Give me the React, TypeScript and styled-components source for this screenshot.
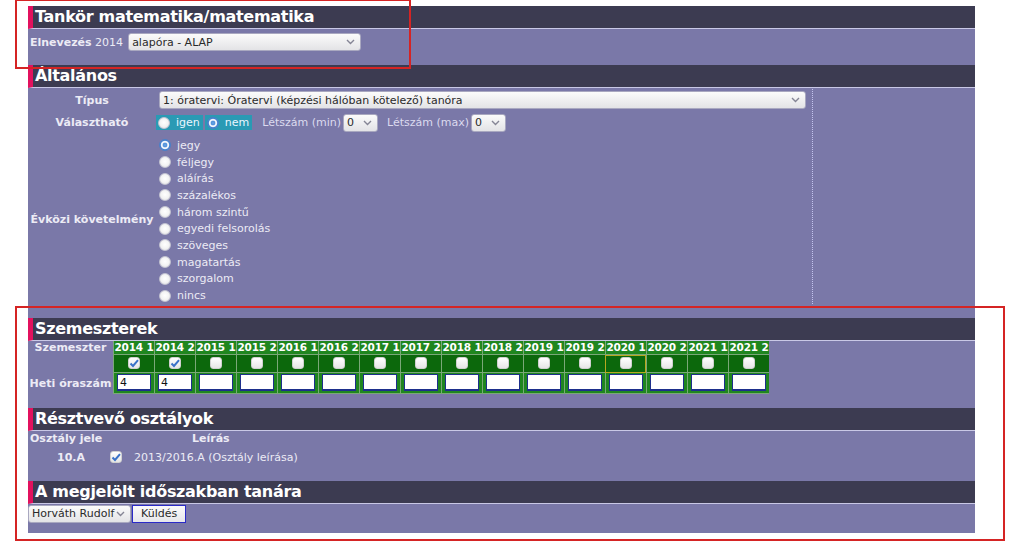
import React from "react";
import styled, { createGlobalStyle, css } from "styled-components";

const Global = createGlobalStyle`
  html, body { margin: 0; padding: 0; background: #fff; }
  body { font-family: "DejaVu Sans", "Noto Sans", sans-serif; font-size: 11px; color: #ecebf5; }
  * { box-sizing: border-box; }
`;

const Page = styled.div`
  position: relative;
  width: 1024px;
  height: 544px;
  padding: 6px 0 0 28px;
`;

const Column = styled.div`
  width: 947px;
  display: flex;
  flex-direction: column;
`;

const Header = styled.div`
  height: 23px;
  background: #3c3b51;
  border-left: 5px solid #e2115e;
  border-bottom: 1px solid #c9c8e6;
  color: #fff;
  font-weight: bold;
  font-size: 16px;
  letter-spacing: -0.3px;
  line-height: 22px;
  padding-left: 2px;
  white-space: nowrap;
`;

const Body = styled.div<{ $pt?: number; $pb?: number }>`
  background: #7a78a8;
  padding: ${(p) => p.$pt ?? 0}px 0 ${(p) => p.$pb ?? 14}px 0;
`;

const Row = styled.div<{ $gap?: number }>`
  display: flex;
  align-items: center;
  gap: ${(p) => p.$gap ?? 0}px;
`;

const Label = styled.span<{ $bold?: boolean }>`
  font-weight: ${(p) => (p.$bold ? "bold" : "normal")};
  color: #ecebf5;
  white-space: nowrap;
`;

const SelectBox = styled.div<{ $w: number; $h?: number }>`
  width: ${(p) => p.$w}px;
  height: ${(p) => p.$h ?? 18}px;
  background: linear-gradient(#fbfbfb, #e3e3e6);
  border: 1px solid #a9a8c0;
  border-radius: 3px;
  color: #2a2a2a;
  display: flex;
  align-items: center;
  justify-content: space-between;
  padding: 0 5px 0 3px;
  font-size: 11px;
  white-space: nowrap;
  overflow: hidden;
`;

const Chevron = () => (
  <svg width="9" height="6" viewBox="0 0 9 6" style={{ flex: "none" }}>
    <path d="M1 1 L4.5 4.5 L8 1" fill="none" stroke="#858595" strokeWidth="1.4" />
  </svg>
);

const Select = ({ w, text, h }: { w: number; text: string; h?: number }) => (
  <SelectBox $w={w} $h={h}>
    <span>{text}</span>
    <Chevron />
  </SelectBox>
);

/* Általános table */
const FormTable = styled.div`
  width: 785px;
  padding-top: 2px;
  border-right: 1px dotted #c4c3ee;
  display: grid;
  grid-template-columns: 128px 1fr;
  grid-template-rows: 18px 19px auto;
  row-gap: 4px;
`;

const FLabel = styled.div`
  font-weight: bold;
  text-align: center;
  align-self: center;
  white-space: nowrap;
`;

const FValue = styled.div<{ $pl?: number }>`
  display: flex;
  align-items: center;
  padding-left: ${(p) => p.$pl ?? 3}px;
`;

const RadioDot = styled.span<{ $on?: boolean }>`
  display: inline-block;
  width: 12px;
  height: 12px;
  border-radius: 50%;
  flex: none;
  background: radial-gradient(circle at 50% 45%, #ffffff 0%, #f4f4f4 50%, #dcdce0 100%);
  border: 1px solid #c4c4d2;
  ${(p) =>
    p.$on &&
    css`
      background: radial-gradient(circle at 50% 50%, #6aa6e8 0%, #4f8fd8 28%, #e6eefa 38%, #f4f7fc 52%, #3d7fd0 66%, #a9c8ee 100%);
      border-color: #4a7fc8;
    `}
`;

const Chip = styled.span`
  display: inline-flex;
  align-items: center;
  gap: 6px;
  background: #2a9ab4;
  height: 15px;
  padding: 0 3px 0 2px;
  color: #eaf6ff;
`;

const LightText = styled.span`
  color: #dcdbef;
  white-space: nowrap;
`;

const RadioList = styled.div`
  display: flex;
  flex-direction: column;
  padding-top: 1px;
`;

const RadioItem = styled.div`
  display: flex;
  align-items: center;
  gap: 6px;
  height: 16.7px;
  color: #ecebf5;
`;

/* Semester grid */
const SemGrid = styled.div`
  display: grid;
  grid-template-columns: 85px repeat(16, 41px);
  grid-template-rows: 14px 18px 21px;
  width: 741px;
`;

const SemLabel = styled.div`
  font-weight: bold;
  display: flex;
  align-items: center;
  justify-content: center;
  white-space: nowrap;
`;

const SemCell = styled.div<{ $kind: "head" | "chk" | "inp"; $focus?: boolean }>`
  border-left: 1px solid #7aa878;
  border-bottom: 1px solid #7aa878;
  display: flex;
  align-items: center;
  justify-content: center;
  white-space: nowrap;
  background: ${(p) => (p.$kind === "chk" ? "#0c680c" : "#1f861f")};
  ${(p) =>
    p.$kind === "head" &&
    css`
      font-weight: bold;
      font-size: 10.5px;
      color: #fff;
      letter-spacing: -0.2px;
    `}
  ${(p) =>
    p.$focus &&
    css`
      outline: 1px solid #b8a820;
      outline-offset: -1px;
    `}
`;

const Box = styled.span`
  width: 12px;
  height: 12px;
  border-radius: 3px;
  background: linear-gradient(#ffffff, #e6e6e6);
  border: 1px solid #d0d0d0;
  display: inline-flex;
  align-items: center;
  justify-content: center;
  flex: none;
`;

const Check = () => (
  <svg width="10" height="9" viewBox="0 0 10 9">
    <path d="M1.5 4.5 L4 7 L9 1.2" fill="none" stroke="#3a72c8" strokeWidth="2" />
  </svg>
);

const CheckBox = ({ on }: { on?: boolean }) => <Box>{on && <Check />}</Box>;

const NumInput = styled.div`
  width: 34px;
  height: 17px;
  background: #fff;
  border: 1px solid #1d2f8c;
  border-width: 1px 1px 2px 1px;
  color: #111;
  font-size: 11px;
  padding-left: 2px;
  line-height: 15px;
`;

/* Osztályok */
const ClassGrid = styled.div`
  display: grid;
  grid-template-columns: 80px 24px 1fr;
  row-gap: 6px;
  padding-left: 2px;
  padding-top: 1px;
  width: 300px;
`;

const Btn = styled.div`
  height: 18px;
  border: 1px solid #2a2ac8;
  background: linear-gradient(#fbfbfb, #e6e6ea);
  color: #2a2a2a;
  padding: 0 8px;
  display: flex;
  align-items: center;
`;

const Annot = styled.div<{ $x: number; $y: number; $w: number; $h: number }>`
  position: absolute;
  left: ${(p) => p.$x}px;
  top: ${(p) => p.$y}px;
  width: ${(p) => p.$w}px;
  height: ${(p) => p.$h}px;
  border: 2px solid #d52424;
  pointer-events: none;
`;

const sems = [
  "2014 1", "2014 2", "2015 1", "2015 2", "2016 1", "2016 2", "2017 1", "2017 2",
  "2018 1", "2018 2", "2019 1", "2019 2", "2020 1", "2020 2", "2021 1", "2021 2",
];

const reqs = [
  "jegy", "féljegy", "aláírás", "százalékos", "három szintű", "egyedi felsorolás",
  "szöveges", "magatartás", "szorgalom", "nincs",
];

export default function App() {
  return (
    <Page>
      <Global />
      <Column>
        <Header>Tankör matematika/matematika</Header>
        <Body $pt={4} $pb={14}>
          <Row $gap={5} style={{ paddingLeft: 2 }}>
            <Label>
              <b style={{ fontWeight: 600 }}>Elnevezés</b> 2014
            </Label>
            <Select w={233} text="alapóra - ALAP" />
          </Row>
        </Body>

        <Header>Általános</Header>
        <Body $pt={1} $pb={14}>
          <FormTable>
            <FLabel>Típus</FLabel>
            <FValue>
              <Select w={647} text="1: óratervi: Óratervi (képzési hálóban kötelező) tanóra" />
            </FValue>
            <FLabel>Választható</FLabel>
            <FValue $pl={0}>
              <Chip>
                <RadioDot />
                igen
              </Chip>
              <Chip style={{ marginLeft: 2 }}>
                <RadioDot $on />
                nem
              </Chip>
              <LightText style={{ marginLeft: 10, marginRight: 2 }}>Létszám (min)</LightText>
              <Select w={35} text="0" />
              <LightText style={{ marginLeft: 9, marginRight: 2 }}>Létszám (max)</LightText>
              <Select w={35} text="0" />
            </FValue>
            <FLabel>Évközi követelmény</FLabel>
            <FValue>
              <RadioList>
                {reqs.map((r, i) => (
                  <RadioItem key={r}>
                    <RadioDot $on={i === 0} />
                    {r}
                  </RadioItem>
                ))}
              </RadioList>
            </FValue>
          </FormTable>
        </Body>

        <Header>Szemeszterek</Header>
        <Body $pt={0} $pb={14}>
          <SemGrid>
            <SemLabel>Szemeszter</SemLabel>
            {sems.map((s) => (
              <SemCell key={s} $kind="head">{s}</SemCell>
            ))}
            <SemLabel />
            {sems.map((s, i) => (
              <SemCell key={s} $kind="chk" $focus={i === 12}>
                <CheckBox on={i < 2} />
              </SemCell>
            ))}
            <SemLabel>Heti óraszám</SemLabel>
            {sems.map((s, i) => (
              <SemCell key={s} $kind="inp">
                <NumInput>{i < 2 ? "4" : ""}</NumInput>
              </SemCell>
            ))}
          </SemGrid>
        </Body>

        <Header>Résztvevő osztályok</Header>
        <Body $pt={0} $pb={17}>
          <ClassGrid>
            <Label $bold>Osztály jele</Label>
            <span />
            <Label $bold style={{ paddingLeft: 58 }}>Leírás</Label>
            <Label $bold style={{ paddingLeft: 27 }}>10.A</Label>
            <Row><CheckBox on /></Row>
            <Label>2013/2016.A (Osztály leírása)</Label>
          </ClassGrid>
        </Body>

        <Header>A megjelölt időszakban tanára</Header>
        <Body $pt={1} $pb={10}>
          <Row $gap={1}>
            <Select w={103} text="Horváth Rudolf" />
            <Btn>Küldés</Btn>
          </Row>
        </Body>
      </Column>
      <Annot $x={15} $y={-1} $w={396} $h={70} />
      <Annot $x={15} $y={306} $w={990} $h={235} />
    </Page>
  );
}
